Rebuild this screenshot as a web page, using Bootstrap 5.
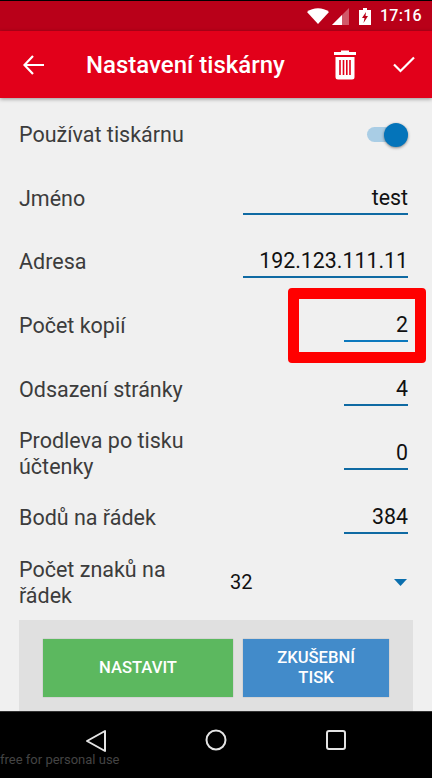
<!DOCTYPE html>
<html lang="cs">
<head>
  <meta charset="UTF-8">
  <title>Nastavení tiskárny</title>
  <link href="https://cdn.jsdelivr.net/npm/bootstrap@5.3.2/dist/css/bootstrap.min.css" rel="stylesheet">
  <style>
    body { background: #000; font-family: Roboto, sans-serif; }
    .phone { width: 432px; height: 778px; position: relative; overflow: hidden; background: #f0f0f0; }
    .status-strip { height: 31px; background: #b90019; border-top: 1px solid #000; padding-right: 10px; color: #fff; font-size: 16px; font-weight: 500; }
    .status-time { margin-left: 9px; letter-spacing: .3px; }
    .wifi-ico { margin-right: 3px; }
    .batt-ico { margin-left: 10px; }
    .app-head { height: 67px; background: #e2001a; box-shadow: 0 1px 4px rgba(0,0,0,.4); color: #fff; position: relative; }
    .app-title { font-size: 24px; font-weight: 500; margin-left: 42px; white-space: nowrap; }
    .back-ico { margin-left: 23px; }
    .trash-ico { margin-left: 49px; }
    .check-ico { margin-left: 37px; }
    .form-body { padding: 0 19px; color: #3c3c3c; font-size: 21.33px; line-height: 26px; }
    .set-row { height: 64px; }
    .set-row.first { height: 68px; padding-top: 6px; }
    .set-row.short { height: 63px; }
    .row-label { font-size: 21.5px; padding-top: 2px; }
    .first .row-label { padding-top: 0; }
    .val-box { border-bottom: 2px solid #0f6aa3; color: #111; text-align: right; height: 34px; line-height: 34px; margin-right: 5px; }
    .val-wide { width: 165px; }
    .val-narrow { width: 64px; }
    .val-focus { border-bottom-color: #0b78bd; }
    .fake-switch { width: 41px; height: 24px; position: relative; margin-right: 5px; }
    .fake-switch::before { content: ""; position: absolute; left: 0; right: 0; top: 4px; height: 15px; border-radius: 8px; background: #a9cde5; }
    .fake-switch::after { content: ""; position: absolute; right: 0; top: 0; width: 24px; height: 24px; border-radius: 50%; background: #0474ba; box-shadow: 0 1px 3px rgba(0,0,0,.45); }
    .count-row { padding-top: 2px; }
    .count-label { width: 190px; }
    .count-value { color: #111; font-size: 20px; margin-left: 21px; }
    .caret-ico { margin-right: 6px; }
    .btn-panel { background: #e0e0e0; height: 91px; padding: 19px 24px 0; gap: 10px; margin-top: 7px; }
    .btn-panel .btn { height: 58px; border: 0; border-radius: 0; color: #fff; font-size: 16.6px; font-weight: 500; line-height: 20px; padding: 0 20px; box-shadow: 0 0 1px rgba(0,0,0,.3); }
    .btn-set { width: 190px; background: #5cb85f; }
    .btn-test { width: 146px; background: #428bca; }
    .nav-strip { position: absolute; left: 0; right: 0; bottom: 0; height: 67px; background: #000; border-top: 1px solid #333; }
    .watermark { position: absolute; left: 0; top: 750px; color: #444; font-size: 13px; line-height: 20px; }
    .red-mark { position: absolute; left: 288px; top: 288px; width: 138px; height: 75px; border: 11px solid #f00; border-radius: 4px; }
  </style>
</head>
<body>
<div class="phone">
  <div class="status-strip d-flex align-items-center justify-content-end">
    <svg class="wifi-ico" width="22" height="16" viewBox="0 0 22 16"><path d="M0 4C6-1 16-1 22 4L11 16z" fill="#fff"/></svg>
    <svg width="17" height="17" viewBox="0 0 17 17"><path d="M17 0V17H0z" fill="#fff" fill-opacity=".35"/><path d="M10 7V17H0z" fill="#fff"/></svg>
    <svg class="batt-ico" width="12" height="17" viewBox="0 0 12 17"><path d="M4 0H8V2H12V17H0V2H4z" fill="#fff"/><path d="M7 4L3 10H5.500L4.500 15L9 8H6.500z" fill="#b90019"/></svg>
    <span class="status-time">17:16</span>
  </div>
  <div class="app-head d-flex align-items-center">
    <svg class="back-ico" width="21" height="20" viewBox="0 0 21 20"><path d="M10 1L1.500 10L10 19M2 10H21" fill="none" stroke="#fff" stroke-width="2.200"/></svg>
    <span class="app-title">Nastavení tiskárny</span>
    <svg class="trash-ico" width="22" height="30" viewBox="0 0 22 30"><path d="M7 2V0.500H15V2H22V5H0V2z" fill="#fff"/><path d="M1.500 7H20.500V27Q20.500 29.500 18 29.500H4Q1.500 29.500 1.500 27z" fill="#fff"/><path d="M6 10V25M9.500 10V25M12.800 10V25M16 10V25" stroke="#e2001a" stroke-width="1.600"/></svg>
    <svg class="check-ico" width="22" height="17" viewBox="0 0 22 17"><path d="M1 8.500L7.500 15L21 1.500" fill="none" stroke="#fff" stroke-width="2.200"/></svg>
  </div>

  <div class="form-body">
    <div class="set-row first d-flex align-items-center justify-content-between">
      <span class="row-label">Používat tiskárnu</span>
      <div class="fake-switch"></div>
    </div>
    <div class="set-row short d-flex align-items-center justify-content-between">
      <span class="row-label">Jméno</span>
      <div class="val-box val-wide">test</div>
    </div>
    <div class="set-row d-flex align-items-center justify-content-between">
      <span class="row-label">Adresa</span>
      <div class="val-box val-wide">192.123.111.11</div>
    </div>
    <div class="set-row d-flex align-items-center justify-content-between">
      <span class="row-label">Počet kopií</span>
      <div class="val-box val-narrow val-focus">2</div>
    </div>
    <div class="set-row d-flex align-items-center justify-content-between">
      <span class="row-label">Odsazení stránky</span>
      <div class="val-box val-narrow">4</div>
    </div>
    <div class="set-row d-flex align-items-center justify-content-between">
      <span class="row-label">Prodleva po tisku<br>účtenky</span>
      <div class="val-box val-narrow">0</div>
    </div>
    <div class="set-row d-flex align-items-center justify-content-between">
      <span class="row-label">Bodů na řádek</span>
      <div class="val-box val-narrow">384</div>
    </div>
    <div class="set-row count-row d-flex align-items-center">
      <span class="row-label count-label">Počet znaků na<br>řádek</span>
      <span class="count-value flex-grow-1">32</span>
      <svg class="caret-ico" width="13" height="7" viewBox="0 0 13 7"><path d="M0 0H13L6.500 7z" fill="#0b6fae"/></svg>
    </div>
    <div class="btn-panel d-flex">
      <button class="btn btn-set">NASTAVIT</button>
      <button class="btn btn-test">ZKUŠEBNÍ TISK</button>
    </div>
  </div>

  <div class="nav-strip d-flex align-items-start">
    <svg width="22" height="24" viewBox="0 0 22 24" style="margin:17px 0 0 85px"><path d="M20 2V22L2 12z" fill="none" stroke="#e4e4e4" stroke-width="2" stroke-linejoin="round"/></svg>
    <svg width="22" height="22" viewBox="0 0 22 22" style="margin:17px 0 0 98px"><circle cx="11" cy="11" r="9.500" fill="none" stroke="#e4e4e4" stroke-width="2"/></svg>
    <svg width="20" height="20" viewBox="0 0 20 20" style="margin:18px 0 0 99px"><rect x="1" y="1" width="18" height="18" rx="2" fill="none" stroke="#e4e4e4" stroke-width="2"/></svg>
  </div>
  <div class="watermark">free for personal use</div>
  <div class="red-mark"></div>
</div>
<script src="https://cdn.jsdelivr.net/npm/bootstrap@5.3.2/dist/js/bootstrap.bundle.min.js"></script>
</body>
</html>
